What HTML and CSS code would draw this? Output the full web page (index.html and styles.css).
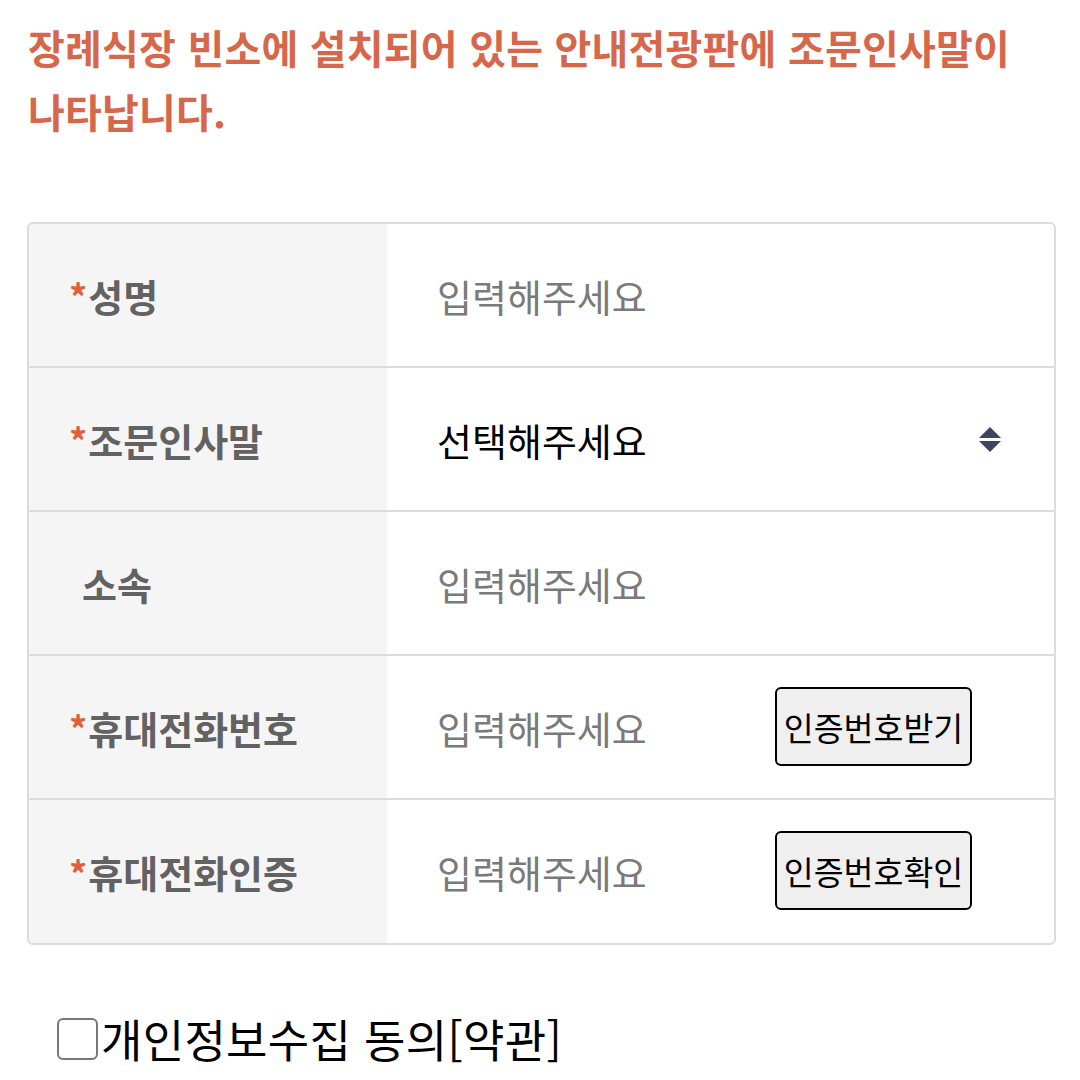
FILE: index.html
```html
<!DOCTYPE html>
<html lang="ko">
<head>
<meta charset="utf-8">
<link rel="stylesheet" href="styles.css">
</head>
<body>
<p class="notice">장례식장 빈소에 설치되어 있는 안내전광판에 조문인사말이 나타납니다.</p>
<div class="form">
  <div class="row">
    <div class="label"><span class="req">*</span>성명</div>
    <div class="field"><span class="ph">입력해주세요</span></div>
  </div>
  <div class="row">
    <div class="label"><span class="req">*</span>조문인사말</div>
    <div class="field select"><span class="val">선택해주세요</span>
      <svg class="arrows" width="24" height="28" viewBox="0 0 24 28"><polygon points="12,1 23,12 1,12" fill="#3b4660"/><polygon points="1,15 23,15 12,26" fill="#3b4660"/></svg>
    </div>
  </div>
  <div class="row">
    <div class="label plain">소속</div>
    <div class="field"><span class="ph">입력해주세요</span></div>
  </div>
  <div class="row">
    <div class="label"><span class="req">*</span>휴대전화번호</div>
    <div class="field"><span class="ph">입력해주세요</span><button class="btn">인증번호받기</button></div>
  </div>
  <div class="row last">
    <div class="label"><span class="req">*</span>휴대전화인증</div>
    <div class="field"><span class="ph">입력해주세요</span><button class="btn">인증번호확인</button></div>
  </div>
</div>
<div class="agree"><span class="box"></span><span class="agree-text">개인정보수집 동의[약관]</span></div>
</body>
</html>
```

FILE: styles.css
```css
html, body {
  margin: 0;
  padding: 0;
  background: #fff;
}
body {
  font-family: "Noto Sans CJK KR", "Noto Sans", sans-serif;
}
.notice {
  margin: 15px 30px 0 28px;
  font-size: 40px;
  line-height: 64px;
  font-weight: 700;
  color: #d7674b;
  letter-spacing: 0.2px;
}
.form {
  margin: 79px 0 0 27px;
  width: 1025px;
  border: 2px solid #dcdcdc;
  border-radius: 6px;
  overflow: hidden;
}
.row {
  display: flex;
  height: 142px;
  border-bottom: 2px solid #dcdcdc;
}
.row.last {
  border-bottom: none;
  height: 143px;
}
.label {
  width: 318px;
  background: #f5f5f5;
  display: flex;
  align-items: center;
  padding-left: 40px;
  font-size: 38px;
  font-weight: 700;
  color: #626262;
}
.label.plain {
  padding-left: 53px;
  width: 305px;
}
.req {
  color: #e0603e;
  font-size: 36px;
  margin-right: 1px;
}
.field {
  flex: 1;
  display: flex;
  align-items: center;
  padding-left: 50px;
  font-size: 38px;
}
.ph {
  color: #7a7a7a;
  width: 338px;
}
.val {
  color: #000;
  flex: 1;
}
.arrows {
  margin-right: 52px;
  margin-top: 2px;
}
.btn {
  font-family: "Noto Sans CJK KR", "Noto Sans", sans-serif;
  font-size: 32.5px;
  color: #000;
  background: #efefef;
  border: 2px solid #000;
  border-radius: 6px;
  width: 197px;
  height: 79px;
  padding: 0;
  margin-top: -2px;
}
.agree {
  display: flex;
  align-items: center;
  margin: 61px 0 0 57px;
  font-size: 45px;
  color: #000;
}
.agree-text {
  letter-spacing: 0.3px;
}
.box {
  width: 37px;
  height: 38px;
  border: 2px solid #777;
  border-radius: 6px;
  margin-right: 3px;
  margin-top: 1px;
}
```
